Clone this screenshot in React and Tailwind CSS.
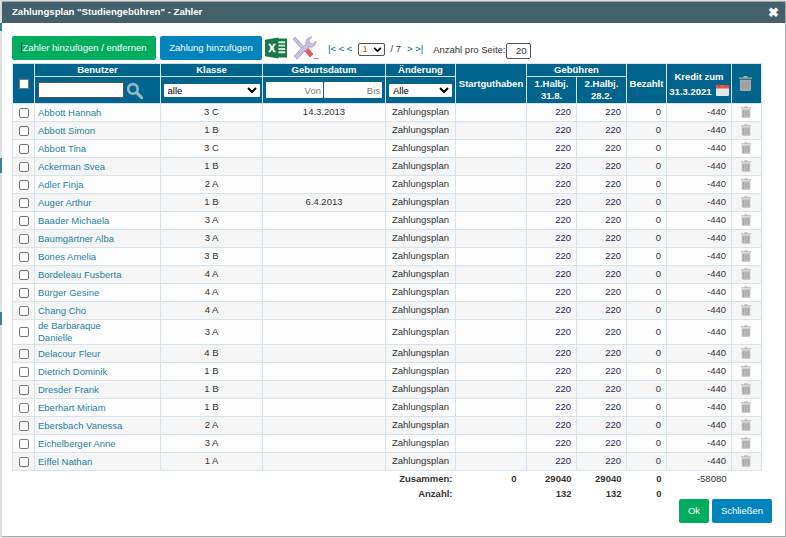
const rows = [
  { name: 'Abbott Hannah', cls: '3 C', dob: '14.3.2013' },
  { name: 'Abbott Simon', cls: '1 B' },
  { name: 'Abbott Tina', cls: '3 C' },
  { name: 'Ackerman Svea', cls: '1 B' },
  { name: 'Adler Finja', cls: '2 A' },
  { name: 'Auger Arthur', cls: '1 B', dob: '6.4.2013' },
  { name: 'Baader Michaela', cls: '3 A' },
  { name: 'Baumgärtner Alba', cls: '3 A' },
  { name: 'Bones Amelia', cls: '3 B' },
  { name: 'Bordeleau Fusberta', cls: '4 A' },
  { name: 'Bürger Gesine', cls: '4 A' },
  { name: 'Chang Cho', cls: '4 A' },
  { name: 'de Barbaraque Danielle', cls: '3 A' },
  { name: 'Delacour Fleur', cls: '4 B' },
  { name: 'Dietrich Dominik', cls: '1 B' },
  { name: 'Dresder Frank', cls: '1 B' },
  { name: 'Eberhart Miriam', cls: '1 B' },
  { name: 'Ebersbach Vanessa', cls: '2 A' },
  { name: 'Eichelberger Anne', cls: '3 A' },
  { name: 'Eiffel Nathan', cls: '1 A' },
]

const Trash = ({ className }) => (
  <svg viewBox="0 0 14 16" className={className} fill="currentColor">
    <path d="M5 0h4l.5 1.5H14V3H0V1.500h4.500z" />
    <path d="M1 4h12v10.500a1.500 1.500 0 0 1-1.500 1.500h-9A1.500 1.500 0 0 1 1 14.500z" />
    <path d="M3.300 6h.8v8h-.8zm3.300 0h.8v8h-.8zm3.300 0h.8v8h-.8z" fill="#7d7d7d" fillOpacity=".55" />
  </svg>
)

const Excel = () => (
  <svg viewBox="0 0 24 24" className="w-[23px] h-[24px] shrink-0">
    <path d="M9 2h13a1 1 0 0 1 1 1v18a1 1 0 0 1-1 1H9z" fill="#1d7a45" />
    <path d="M13 5h8v2h-8zm0 3.500h8v2h-8zm0 3.500h8v2h-8zm0 3.500h8v2h-8z" fill="#d5ebdd" />
    <path d="M0 3.500 14 1v22L0 20.500z" fill="#16794a" />
    <path d="M3.300 7.500h2.600l1.400 2.900 1.500-2.900h2.500l-2.600 4.500 2.700 4.500H8.800l-1.500-3-1.500 3H3.200L5.900 12z" fill="#fff" />
  </svg>
)

const Tools = () => (
  <svg viewBox="0 0 28 24" className="w-[28px] h-[24px] shrink-0">
    <path d="M2 3 4 1l11 12-2 3z" fill="#c9bde0" stroke="#9a8fb5" strokeWidth=".6" />
    <path d="M13 14l3-3 6 7-3 3z" fill="#ec5a63" stroke="#b9434b" strokeWidth=".6" />
    <path d="M3 20 15 8c-1-3 1-7 6-7l-3 3 1 3 3 1 3-3c0 5-4 7-7 6L6 23z" fill="#c9bde0" stroke="#9a8fb5" strokeWidth=".6" />
    <path d="M23 22h5v1h-5z" fill="#9a9a9a" />
  </svg>
)

const Calendar = () => (
  <svg viewBox="0 0 13 12" className="inline-block w-[13px] h-[12px] ml-1 align-[-1px]">
    <rect x="0" y="1" width="13" height="11" rx="1" fill="#dfe5e8" />
    <rect x="0" y="1" width="13" height="3.500" fill="#e2574c" />
    <rect x="2.500" y="0" width="1.500" height="2.500" fill="#b73c33" />
    <rect x="9" y="0" width="1.500" height="2.500" fill="#b73c33" />
  </svg>
)

const th = 'border border-[#d5e4ec] bg-[#00648c] text-white font-bold text-center p-0 leading-[12px]'
const td = 'border border-[#d5e4ec] px-[3px] py-0'
const num = 'border border-[#d5e4ec] pl-[3px] pr-[5px] py-0 text-right'

export default function App() {
  return (
    <div className="relative w-[786px] h-[538px] bg-[#dedede] pt-[1px] pl-[2px] font-['Liberation_Sans',Arial,sans-serif] text-[9.500px] text-[#333] overflow-hidden">
      <div className="absolute left-0 top-[23px] w-[2px] h-[8px] bg-[#2f7fa6]" />
      <div className="absolute left-0 top-[158px] w-[2px] h-[15px] bg-[#3d7f9c]" />
      <div className="absolute left-0 top-[312px] w-[2px] h-[13px] bg-[#3d7f9c]" />

      <div className="w-[784px] h-[536px] bg-white flex flex-col border-t border-r border-b border-[#a8a8a8]">
        <div className="h-[21px] shrink-0 bg-[#44606a] flex items-center justify-between pl-[10px] pr-[6px] text-white font-bold text-[9.600px]">
          <span>Zahlungsplan "Studiengebühren" - Zahler</span>
          <span className="text-[13px] leading-none">✖</span>
        </div>

        <div className="pl-[10px] pr-[13px] pt-[12px]">
          <div className="flex items-center h-[26px] mb-[2px]">
            <button className="h-[24px] w-[144px] bg-[#00ad5f] text-white rounded-[2px] text-[9.500px]">
              <span className="inline-block w-px h-[11px] bg-[#0a3a2a] align-[-2px]" />Zahler hinzufügen / entfernen
            </button>
            <button className="h-[24px] w-[102px] ml-[4px] bg-[#0084bd] text-white rounded-[2px] text-[9.500px]">Zahlung hinzufügen</button>
            <div className="ml-[3px]"><Excel /></div>
            <div className="ml-[3px]"><Tools /></div>
            <span className="ml-[9px] mt-[2px] text-[#00648c]">|&lt; &lt; &lt;</span>
            <div className="relative ml-[6px] mt-[2px] w-[27px] h-[13px]">
              <select defaultValue="1" className="block appearance-none w-[27px] h-[13px] pl-[3px] border border-[#555] rounded-[2px] text-[9.500px] text-[#c46a00] leading-none">
                <option>1</option>
              </select>
              <svg viewBox="0 0 10 6" className="absolute right-[3px] top-[4px] w-[9px] h-[5px]" fill="none" stroke="#000" strokeWidth="2">
                <path d="M1 1l4 4 4-4" />
              </svg>
            </div>
            <span className="ml-[5px] mt-[2px]">/ 7</span>
            <span className="ml-[6px] mt-[2px] text-[#00648c]">&gt; &gt;|</span>
            <span className="ml-[10px] mt-[5px]">Anzahl pro Seite:</span>
            <input defaultValue="20" className="w-[25px] h-[16px] mt-[5px] border border-[#555] rounded-[2px] text-right pr-[3px] text-[9.500px]" />
          </div>

          <table className="border-collapse table-fixed w-[749px]">
            <colgroup>
              <col className="w-[22px]" />
              <col className="w-[126px]" />
              <col className="w-[102px]" />
              <col className="w-[123px]" />
              <col className="w-[70px]" />
              <col className="w-[71px]" />
              <col className="w-[50px]" />
              <col className="w-[50px]" />
              <col className="w-[40px]" />
              <col className="w-[65px]" />
              <col className="w-[30px]" />
            </colgroup>
            <thead>
              <tr className="h-[13px]">
                <th rowSpan={2} className={th}><input type="checkbox" className="w-[10px] h-[10px] align-middle appearance-none bg-white border border-[#777] rounded-[1px]" /></th>
                <th className={th}>Benutzer</th>
                <th className={th}>Klasse</th>
                <th className={th}>Geburtsdatum</th>
                <th className={th}>Änderung</th>
                <th rowSpan={2} className={th}>Startguthaben</th>
                <th colSpan={2} className={th}>Gebühren</th>
                <th rowSpan={2} className={th}>Bezahlt</th>
                <th rowSpan={2} className={th}>
                  <div className="leading-[15px]">Kredit zum</div>
                  <div className="leading-[15px]">31.3.2021<Calendar /></div>
                </th>
                <th rowSpan={2} className={th + ' pr-[2px]'}><Trash className="w-[13px] h-[15px] mx-auto text-[#a8a8a8]" /></th>
              </tr>
              <tr className="h-[27px]">
                <th className={th}>
                  <div className="flex items-center pl-[3px] gap-[2px]">
                    <input className="w-[86px] h-[16px] bg-white border border-[#555] rounded-[1px]" />
                    <svg viewBox="0 0 16 16" className="w-[17px] h-[17px]" fill="none" stroke="#8fb8cb" strokeWidth="2.400">
                      <circle cx="6.500" cy="6.500" r="4.500" />
                      <path d="M10 10l5 5" strokeLinecap="round" strokeWidth="3" />
                    </svg>
                  </div>
                </th>
                <th className={th}>
                  <select defaultValue="alle" className="block mx-auto w-[96px] h-[13px] bg-white text-black text-[9.500px] font-normal text-left rounded-[1px] leading-none">
                    <option>alle</option>
                  </select>
                </th>
                <th className={th}>
                  <div className="flex justify-center gap-[1px]">
                    <input placeholder="Von" className="w-[57px] h-[16px] bg-white text-right pr-[2px] font-normal text-[9.500px] rounded-[1px] placeholder:text-[#777]" />
                    <input placeholder="Bis" className="w-[58px] h-[16px] bg-white text-right pr-[2px] font-normal text-[9.500px] rounded-[1px] placeholder:text-[#777]" />
                  </div>
                </th>
                <th className={th}>
                  <select defaultValue="Alle" className="block mx-auto w-[63px] h-[13px] bg-white text-black text-[9.500px] font-normal text-left rounded-[1px] leading-none">
                    <option>Alle</option>
                  </select>
                </th>
                <th className={th}>1.Halbj.<br />31.8.</th>
                <th className={th}>2.Halbj.<br />28.2.</th>
              </tr>
            </thead>
            <tbody>
              {rows.map((r, i) => (
                <tr key={r.name} className={i % 2 ? 'bg-[#f5f5f5] h-[18px]' : 'bg-[#fdfdfd] h-[18px]'}>
                  <td className={td + ' text-center'}>
                    <input type="checkbox" className="w-[10px] h-[10px] align-middle appearance-none bg-white border border-[#777] rounded-[2px]" />
                  </td>
                  <td className={td + ' text-[#1f7f9f] leading-[12px] pr-[30px]'}>{r.name}</td>
                  <td className={td + ' text-center'}>{r.cls}</td>
                  <td className={td + ' text-center'}>{r.dob}</td>
                  <td className={td + ' text-center'}>Zahlungsplan</td>
                  <td className={td}></td>
                  <td className={num + ' text-[#22265e]'}>220</td>
                  <td className={num + ' text-[#22265e]'}>220</td>
                  <td className={num}>0</td>
                  <td className={num}>-440</td>
                  <td className="border border-[#d5e4ec] pl-[2px] pr-[4px] py-0"><Trash className="w-[10px] h-[12px] mx-auto -mt-[2px] text-[#bbbbbb]" /></td>
                </tr>
              ))}
              <tr className="h-[16px] font-bold text-right">
                <td colSpan={5} className="px-[3px]">Zusammen:</td>
                <td className="pr-[10px]">0</td>
                <td className="pr-[5px]">29040</td>
                <td className="pr-[5px]">29040</td>
                <td className="pr-[5px]">0</td>
                <td className="pr-[5px] font-normal">-58080</td>
                <td></td>
              </tr>
              <tr className="h-[13px] font-bold text-right">
                <td colSpan={5} className="px-[3px]">Anzahl:</td>
                <td></td>
                <td className="pr-[5px]">132</td>
                <td className="pr-[5px]">132</td>
                <td className="pr-[5px]">0</td>
                <td></td>
                <td></td>
              </tr>
            </tbody>
          </table>

          <div className="flex justify-end gap-[3px] -mt-[2px]">
            <button className="w-[30px] h-[24px] bg-[#00ad5f] text-white rounded-[2px] text-[9.500px]">Ok</button>
            <button className="w-[60px] h-[24px] bg-[#0084bd] text-white rounded-[2px] text-[9.500px]">Schließen</button>
          </div>
        </div>
      </div>
    </div>
  )
}
